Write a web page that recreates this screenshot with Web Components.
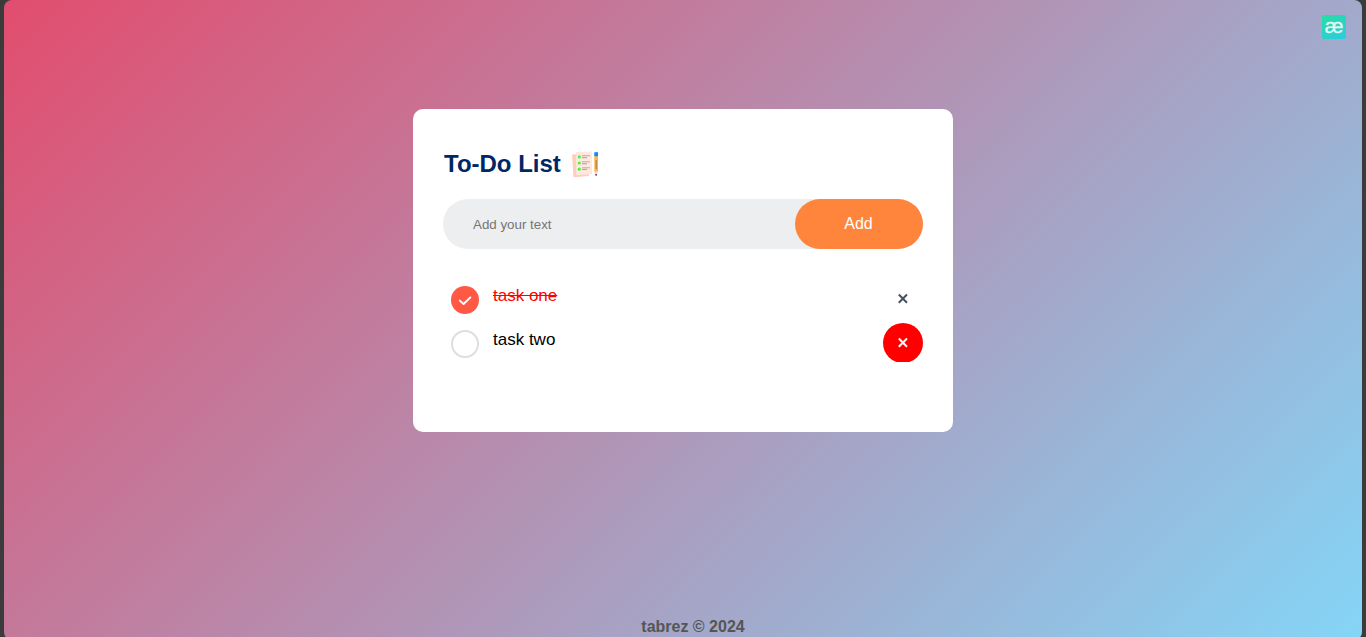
<!DOCTYPE html>
<html lang="en">
<head>
<meta charset="utf-8">
<title>To-Do List</title>
<style>
html,body{margin:0;height:100%;overflow:hidden;background:#3b3b3b;font-family:"Liberation Sans",Arial,sans-serif}
</style>
</head>
<body>
<todo-page>
  <todo-card>
    <todo-item checked>task one</todo-item>
    <todo-item hot>task two</todo-item>
  </todo-card>
  <span slot="footer">tabrez © 2024</span>
</todo-page>
<script>
const define = (name, html) => customElements.define(name, class extends HTMLElement {
  constructor() {
    super();
    this.attachShadow({ mode: 'open' }).innerHTML = html;
  }
});

define('brand-badge', `
<style>
:host{display:block;width:24px;height:24px;border-radius:2px;background:linear-gradient(150deg,#27dda0,#2bcce4)}
span{display:block;width:24px;text-align:center;font:400 21px/22px "Liberation Sans",Arial,sans-serif;color:#e9f5f4;-webkit-text-stroke:.3px #e9f5f4}
</style><span>æ</span>`);

define('list-icon', `
<style>:host{display:block;width:30px;height:30px}svg{display:block}</style>
<svg width="30" height="30" viewBox="0 0 30 30">
  <path d="M2 4.5 16 3.5 19 26 3.5 27.3Z" fill="#ffcdbd"/>
  <path d="M6 2.2 21.8 1.4 22 24.3 6.3 25Z" fill="#ffe8dc"/>
  <g fill="#48f83d"><circle cx="9.3" cy="6.9" r="1.6"/><circle cx="9.3" cy="13" r="1.6"/><circle cx="9.3" cy="19.2" r="1.6"/></g>
  <path d="M12 5.7h8M12 11.8h8M12 17.8h8" stroke="#c0a8b5" stroke-width="1"/>
  <path d="M12 7.7h5M12 13.8h5M12 19.4h5" stroke="#ad98b3" stroke-width="1"/>
  <path d="M24.3 5.5h3.7v16.2h-3.7z" fill="#ffb34a"/>
  <path d="M24.3 2.2h3.7v4h-3.7z" fill="#078cff"/>
  <path d="M26.2 10v9" stroke="#a57b41" stroke-width="1"/>
  <path d="M24.3 21.7h3.7l-1.3 3.2h-1.1z" fill="#ffd0c9"/>
  <circle cx="26.1" cy="24.8" r=".9" fill="#382e36"/>
</svg>`);

define('todo-entry', `
<style>
:host{display:flex;height:50px;border-radius:30px;background:#edeef0;margin-bottom:25px}
input{flex:1;min-width:0;border:0;outline:0;background:transparent;padding:1px 0 0 30px;font:13.333px "Liberation Sans",Arial,sans-serif}
input::placeholder{color:#757575}
button{width:128px;border:0;border-radius:40px;padding:0 1px 0 0;background:#ff853c;color:#fff;font:16px "Liberation Sans",Arial,sans-serif}
</style><input placeholder="Add your text"><button>Add</button>`);

define('todo-item', `
<style>
:host{display:flex;align-items:flex-start;height:44px;box-sizing:border-box;padding-left:8px;font-size:17px;line-height:20px;color:#000}
svg{display:block;flex:none}
.mark{margin-top:12px}
.done,.tick{display:none}
:host([checked]) .done,:host([checked]) .tick{display:block}
:host([checked]) .open{display:none}
.text{flex:1;padding:12px 0 0 14px}
:host([checked]) .text{color:#f00;text-decoration:line-through}
.hole{width:40px;height:39px;overflow:hidden;margin-top:5px;color:#45535f}
.close{width:40px;height:40px;border-radius:50%}
:host([hot]) .close{background:#f00;color:#fff}
</style>
<svg class="mark" width="28" height="28" viewBox="0 0 28 28">
  <circle class="open" cx="14" cy="14" r="13" fill="#fff" stroke="#dedede" stroke-width="2"/>
  <circle class="done" cx="14" cy="14" r="14" fill="#ff5945"/>
  <path class="tick" d="M8.8 14.6 12.6 18 19.4 11.4" fill="none" stroke="#fff" stroke-width="1.9" stroke-linecap="round" stroke-linejoin="round"/>
</svg>
<div class="text"><slot></slot></div>
<div class="hole"><div class="close"><svg width="40" height="40" viewBox="0 0 40 40"><path d="M15.8 15.5 24 23.7M24 15.5 15.8 23.7" stroke="currentColor" stroke-width="2"/></svg></div></div>`);

define('todo-card', `
<style>
:host{display:block;box-sizing:border-box;width:540px;height:323px;margin:109px auto 0;padding:40px 30px 70px;background:#fff;border-radius:10px}
h2{display:flex;align-items:center;height:30px;margin:0 0 20px;padding-left:1px;font-size:24px;line-height:30px;color:#002765}
list-icon{margin:1px 0 0 9px}
</style>
<h2><span>To-Do List</span><list-icon></list-icon></h2>
<todo-entry></todo-entry>
<div><slot></slot></div>`);

define('todo-page', `
<style>
:host{display:flex;flex-direction:column;box-sizing:border-box;height:640px;margin:0 4px;border-radius:8px;background:linear-gradient(135deg,#e24d6e,#84d5f7);position:relative;overflow:hidden}
brand-badge{position:absolute;right:16px;top:15px}
footer{margin:auto 0 4px;padding-left:20px;text-align:center;font-weight:700;font-size:16px;line-height:18px;color:#555}
</style>
<brand-badge></brand-badge>
<slot></slot>
<footer><slot name="footer"></slot></footer>`);
</script>
</body>
</html>
